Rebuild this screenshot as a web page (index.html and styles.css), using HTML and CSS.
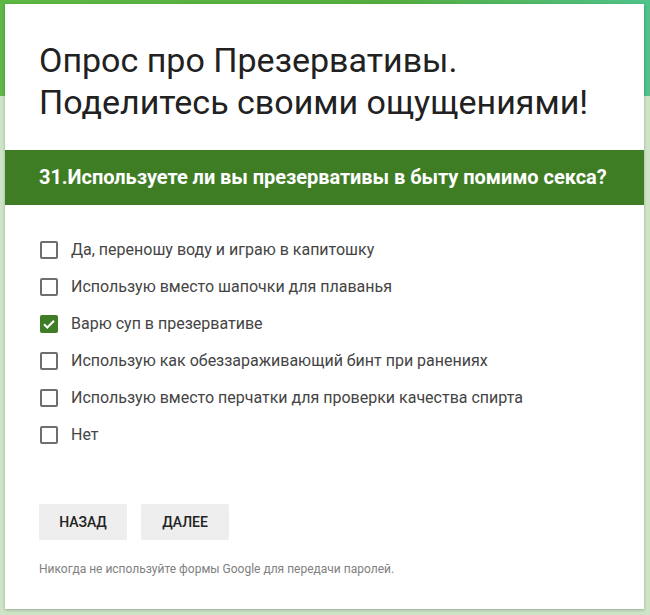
FILE: index.html
```html
<!DOCTYPE html>
<html>
<head>
<meta charset="UTF-8">
<title>Опрос про Презервативы</title>
<link rel="stylesheet" href="styles.css">
</head>
<body>
<div class="fond"></div>
<div class="carte">
  <h1 class="titre">Опрос про Презервативы.<br>Поделитесь своими ощущениями!</h1>

  <div class="question">31.Используете ли вы презервативы в быту помимо секса?</div>

  <ul class="choix">
    <li><span class="case"></span>Да, переношу воду и играю в капитошку</li>
    <li><span class="case"></span>Использую вместо шапочки для плаванья</li>
    <li><span class="case cochee"><svg viewBox="0 0 18 18" width="18" height="18"><path d="M4 9.2l3.3 3.3L14 5.8" fill="none" stroke="#fff" stroke-width="2"/></svg></span>Варю суп в презервативе</li>
    <li><span class="case"></span>Использую как обеззараживающий бинт при ранениях</li>
    <li><span class="case"></span>Использую вместо перчатки для проверки качества спирта</li>
    <li><span class="case"></span>Нет</li>
  </ul>

  <div class="boutons">
    <button class="bouton">НАЗАД</button>
    <button class="bouton">ДАЛЕЕ</button>
  </div>

  <p class="avis">Никогда не используйте формы Google для передачи паролей.</p>
</div>
</body>
</html>
```

FILE: styles.css
```css
html, body {margin:0;height:100%;}
body {
  background:#cde4c6;
  font-family: Roboto, "Noto Sans", Arial, sans-serif;
  padding:4px 6px 0 5px;
  box-sizing:border-box;
  position:relative;
}
/* le bandeau vert du haut */
.fond {
  position:absolute;left:0;top:0;right:0;height:96px;
  background:linear-gradient(90deg, #5db845 0%, #55ad3f 60%, #4fc38a 100%);
}
.carte {
  position:relative;
  background:#fff;
  height:605px;
  box-sizing:border-box;
  box-shadow:0 1px 3px rgba(0,0,0,.25);
  padding-top:35px;
}
.titre {
  margin:0;
  padding:0 35px 0 34px;
  font-weight:400;
  font-size:34px;
  line-height:42px;
  color:#212121;
}
.question {
  margin-top:27px;
  background:#3e7d24;
  color:#fff;
  height:55px;
  line-height:55px;
  padding-left:34px;
  font-weight:700;
  font-size:20px;
  letter-spacing:-0.05px;
}
.choix {
  list-style:none;
  margin:0;
  padding:26px 0 0 35px;
}
.choix li {
  display:flex;
  align-items:center;
  height:37px;
  font-size:16px;
  color:#444;
}
.case {
  width:18px;height:18px;
  box-sizing:border-box;
  border:2px solid #6e6e6e;
  border-radius:2px;
  margin-right:13px;
  flex:none;
  display:flex;
}
.case.cochee {border:none;background:#3e7d24;}
.boutons {
  display:flex;
  gap:14px;
  padding:51px 0 0 34px;
}
.bouton {
  width:88px;height:36px;
  border:none;border-radius:2px;
  background:#eeeeee;
  font-family:Roboto, sans-serif;
  font-weight:500;
  font-size:14px;
  color:#222;
}
.avis {
  margin:22px 0 0 34px;
  font-size:12px;
  color:#808080;
}
```
